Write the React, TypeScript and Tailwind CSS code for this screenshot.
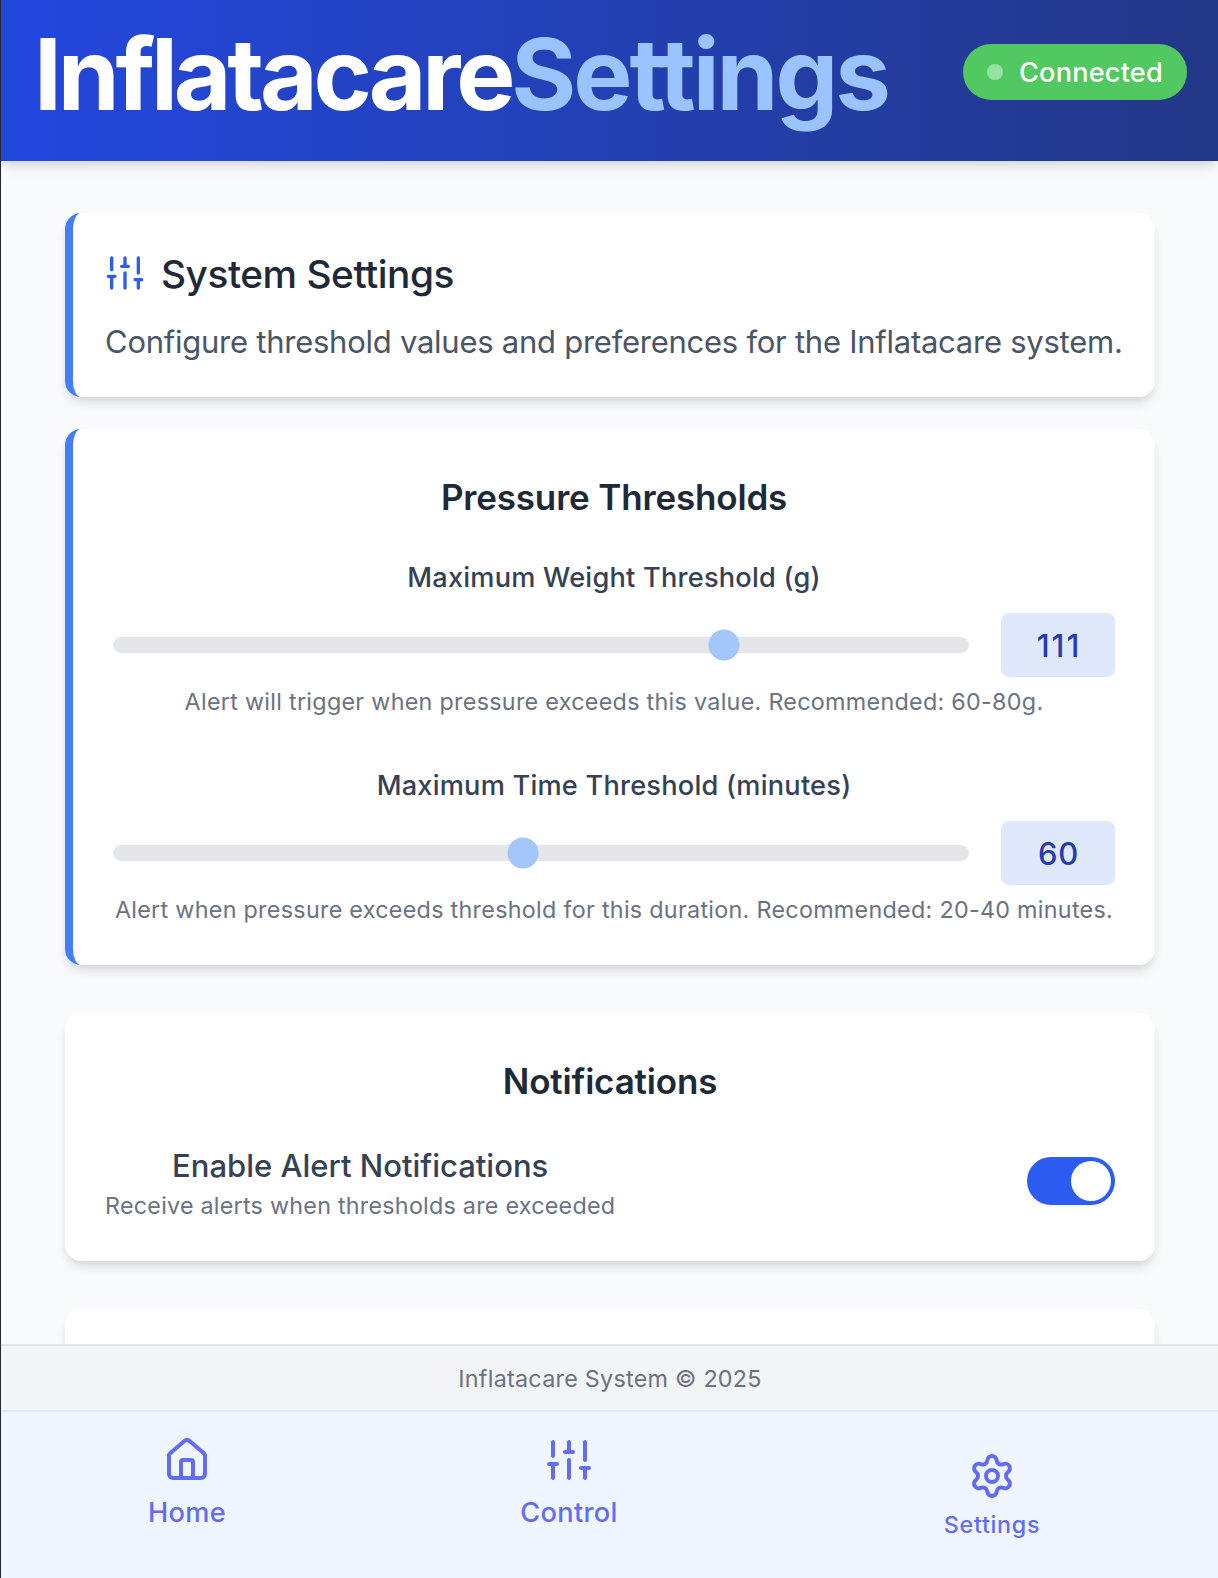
import type { ReactNode } from "react";
import { House, Settings } from "lucide-react";

const card =
  "rounded-[16px] bg-white shadow-[0_8px_12px_-2px_rgba(0,0,0,0.1),0_4px_8px_-4px_rgba(0,0,0,0.1)]";

function SlidersIcon({ className }: { className: string }) {
  return (
    <svg
      className={className}
      viewBox="0 0 24 24"
      fill="none"
      stroke="currentColor"
      strokeWidth="2"
      strokeLinecap="round"
      strokeLinejoin="round"
    >
      <path d="M4 21v-7M4 10V3M12 21v-9M12 8V3M20 21v-5M20 12V3M2 14h4M10 8h4M18 16h4" />
    </svg>
  );
}

function SectionTitle({ children }: { children: ReactNode }) {
  return (
    <h3 className="mb-8 h-14 text-center text-[35px] leading-14 font-semibold tracking-[-0.17px] text-[#1f2937]">
      {children}
    </h3>
  );
}

interface ThresholdProps {
  label: string;
  value: number;
  valueClass: string;
  position: number;
  hint: string;
}

function Threshold({ label, value, valueClass, position, hint }: ThresholdProps) {
  return (
    <div>
      <div className="mb-4 h-10 text-center text-[27.2px] leading-[42px] font-medium tracking-[0.21px] whitespace-nowrap text-[#364153]">
        {label}
      </div>
      <div className="flex items-center gap-8">
        <div className="relative h-4 flex-1 rounded-full bg-[#e5e6ea]">
          <div
            className="absolute top-1/2 size-[31px] -translate-x-1/2 -translate-y-1/2 rounded-full bg-[#a3c6fb]"
            style={{ left: position }}
          />
        </div>
        <div
          className={`h-16 w-[114px] rounded-lg bg-[#dfe9fb] text-center leading-[66px] font-medium text-[#233cb3] ${valueClass}`}
        >
          {value}
        </div>
      </div>
      <p className="mt-2 flex h-8 justify-center text-[23.3px] leading-[34px] tracking-[0.3px] whitespace-nowrap text-[#6b7282]">
        {hint}
      </p>
    </div>
  );
}

export default function App() {
  return (
    <div className="flex h-[1578px] w-[1218px] flex-col overflow-hidden border-l border-[#26262c] bg-[#f9fafc] font-['Inter',sans-serif]">
      <header className="z-10 flex h-[161px] shrink-0 justify-between bg-linear-to-r from-[#2347de] via-[#2340b3] to-[#233787] pr-[31px] pl-[33px] shadow-[0_8px_12px_-2px_rgba(0,0,0,0.1),0_4px_8px_-4px_rgba(0,0,0,0.1)]">
        <h1 className="h-[148px] text-[99.4px] leading-[148px] font-bold tracking-[-4.15px] whitespace-nowrap text-white">
          Inflatacare<span className="tracking-[-3.05px] text-[#9ac4ff]">Settings</span>
        </h1>
        <div className="mt-11 flex h-14 w-[224px] items-center gap-4 rounded-full bg-[#52c860] pl-6">
          <span className="size-4 rounded-full bg-[#96e2a1]" />
          <span className="h-14 text-[27.2px] leading-[58px] font-medium tracking-[0.15px] text-white">Connected</span>
        </div>
      </header>

      <main className="flex-1 overflow-hidden px-16 pt-[52px]">
        <div className="w-[1090px]">
          <section className={`${card} h-[184px] border-l-8 border-[#447dfd] p-8`}>
            <div className="mb-4 flex h-14 items-center gap-4">
              <SlidersIcon className="size-10 text-[#2c5cf2]" />
              <h2 className="h-14 text-[38.8px] leading-[58px] font-medium tracking-[-0.46px] whitespace-nowrap text-[#1f2937]">
                System Settings
              </h2>
            </div>
            <p className="h-12 text-[31px] leading-[50px] tracking-[-0.255px] whitespace-nowrap text-[#4b5565]">
              Configure threshold values and preferences for the Inflatacare system.
            </p>
          </section>

          <section className={`${card} mt-8 h-[536px] border-l-8 border-[#447dfd] p-10`}>
            <SectionTitle>Pressure Thresholds</SectionTitle>
            <div className="flex flex-col gap-12">
              <Threshold
                label="Maximum Weight Threshold (g)"
                value={111}
                valueClass="pl-0.5 text-[31px] tracking-[1.9px]"
                position={611}
                hint="Alert will trigger when pressure exceeds this value. Recommended: 60-80g."
              />
              <Threshold
                label="Maximum Time Threshold (minutes)"
                value={60}
                valueClass="pl-px text-[31px] tracking-[0.8px]"
                position={410}
                hint="Alert when pressure exceeds threshold for this duration. Recommended: 20-40 minutes."
              />
            </div>
          </section>

          <section className={`${card} mt-12 h-[248px] p-10`}>
            <SectionTitle>Notifications</SectionTitle>
            <div className="flex items-center justify-between">
              <div className="text-center whitespace-nowrap">
                <h4 className="h-12 text-[31px] leading-[50px] font-medium text-[#364153]">
                  Enable Alert Notifications
                </h4>
                <p className="h-8 text-[23.3px] leading-[34px] tracking-[0.25px] text-[#6b7282]">
                  Receive alerts when thresholds are exceeded
                </p>
              </div>
              <div className="flex h-12 w-[88px] items-center justify-end rounded-full bg-[#2c5cf2] p-1">
                <span className="size-10 rounded-full bg-white" />
              </div>
            </div>
          </section>

          <section className={`${card} mt-12 h-40`} />
        </div>
      </main>

      <footer className="h-[66px] shrink-0 border-t-2 border-[#e4e5ea] bg-[#f3f4f6] py-4 pl-px text-center text-[23.3px] leading-[34px] tracking-[0.27px] text-[#6b7282]">
        Inflatacare System © 2025
      </footer>

      <nav className="grid h-[168px] shrink-0 grid-cols-[372px_392px_1fr] border-t-2 border-[#dfe9fb] bg-[#eff6ff] text-[#636cf7]">
        <div className="flex flex-col items-center pt-6">
          <House className="size-12" />
          <span className="mt-2 text-[27.2px] leading-[42px] font-medium tracking-[0.3px]">Home</span>
        </div>
        <div className="flex flex-col items-center pt-6">
          <SlidersIcon className="size-12" />
          <span className="mt-2 text-[27.2px] leading-[42px] font-medium tracking-[0.3px]">Control</span>
        </div>
        <div className="flex flex-col items-center pt-10">
          <Settings className="size-12" />
          <span className="mt-2 pl-px text-[23.3px] leading-[34px] font-medium tracking-[0.7px]">Settings</span>
        </div>
      </nav>
    </div>
  );
}
